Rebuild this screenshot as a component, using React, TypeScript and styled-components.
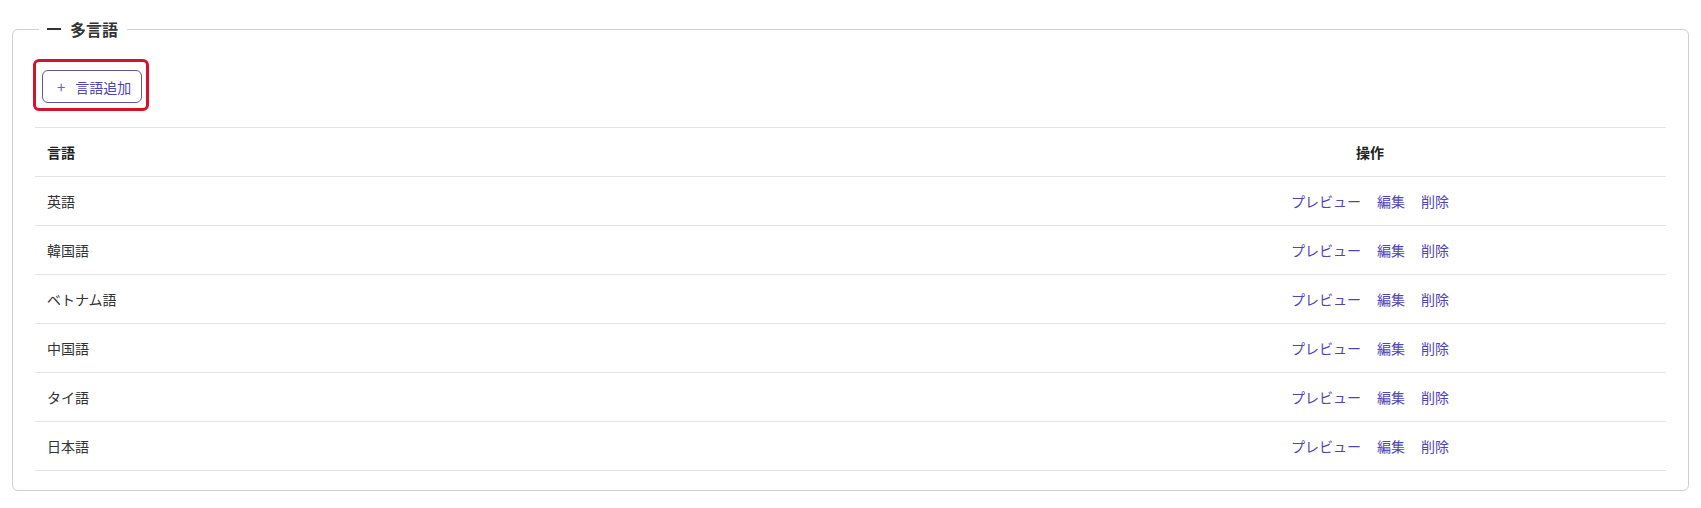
import React from "react";
import styled, { createGlobalStyle } from "styled-components";

const Global = createGlobalStyle`
  html, body { margin: 0; padding: 0; background: #fff; }
  body { font-family: "Noto Sans CJK JP", "Noto Sans", sans-serif; color: #333; }
`;

const Fieldset = styled.fieldset`
  margin: 19px 12px 0 12px;
  padding: 20px 22px 19px 22px;
  border: 1px solid #cfcfd3;
  border-radius: 6px;
  min-width: 0;
`;

const Legend = styled.legend`
  margin-left: 4px;
  padding: 0 9px 0 8px;
  font-size: 16px;
  line-height: 20px;
  font-weight: 700;
  color: #333;
  display: flex;
  align-items: center;
  gap: 9px;
`;

const Dash = styled.span`
  display: inline-block;
  width: 14px;
  height: 2px;
  background: #333;
`;

const Highlight = styled.div`
  display: inline-block;
  margin-left: -2px;
  padding: 8px 4px 5px 6px;
  border: 3px solid #d8112b;
  border-radius: 6px;
`;

const AddButton = styled.button`
  display: flex;
  align-items: center;
  gap: 10px;
  width: 100px;
  height: 33px;
  padding: 0 0 0 14px;
  border: 1px solid #5f58a6;
  border-radius: 6px;
  background: #fff;
  color: #4f46b5;
  font-family: inherit;
  font-size: 14px;
  cursor: pointer;
`;

const Plus = styled.span`
  font-size: 15px;
  color: #6b64c0;
`;

const Table = styled.table`
  margin-top: 16px;
  width: 100%;
  border-collapse: collapse;
  font-size: 14px;
`;

const HeadCell = styled.th<{ $center?: boolean }>`
  height: 48px;
  padding: 0 0 0 12px;
  text-align: ${(p) => (p.$center ? "center" : "left")};
  font-weight: 700;
  color: #222;
  border-top: 1px solid #e3e3e6;
  border-bottom: 1px solid #e3e3e6;
  ${(p) => (p.$center ? "width: 592px; padding: 0;" : "")}
`;

const Cell = styled.td<{ $center?: boolean }>`
  height: 48px;
  padding: ${(p) => (p.$center ? "0" : "0 0 0 12px")};
  text-align: ${(p) => (p.$center ? "center" : "left")};
  color: #333;
  border-bottom: 1px solid #e3e3e6;
`;

const Actions = styled.div`
  display: inline-flex;
  gap: 16px;
`;

const LinkText = styled.a`
  color: #4f46b5;
  text-decoration: none;
  cursor: pointer;
`;

const langs = ["英語", "韓国語", "ベトナム語", "中国語", "タイ語", "日本語"];

export default function App() {
  return (
    <>
      <Global />
      <Fieldset>
        <Legend>
          <Dash />
          多言語
        </Legend>
        <Highlight>
          <AddButton>
            <Plus>+</Plus>
            言語追加
          </AddButton>
        </Highlight>
        <Table>
          <thead>
            <tr>
              <HeadCell>言語</HeadCell>
              <HeadCell $center>操作</HeadCell>
            </tr>
          </thead>
          <tbody>
            {langs.map((l) => (
              <tr key={l}>
                <Cell>{l}</Cell>
                <Cell $center>
                  <Actions>
                    <LinkText>プレビュー</LinkText>
                    <LinkText>編集</LinkText>
                    <LinkText>削除</LinkText>
                  </Actions>
                </Cell>
              </tr>
            ))}
          </tbody>
        </Table>
      </Fieldset>
    </>
  );
}
